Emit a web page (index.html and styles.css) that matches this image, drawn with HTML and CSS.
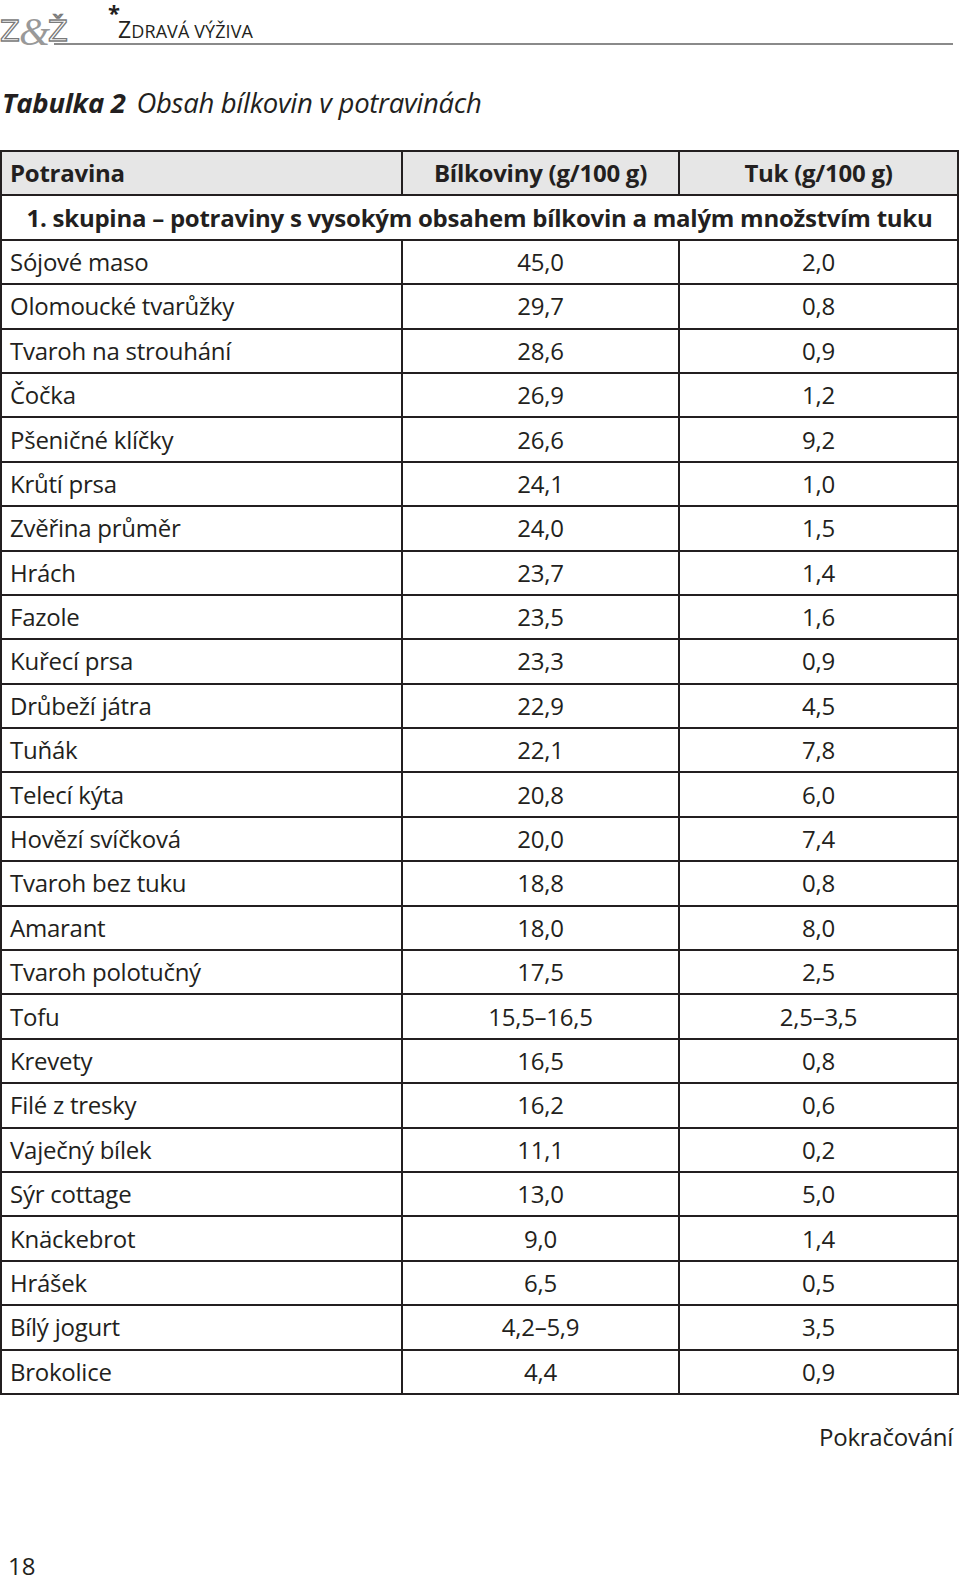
FILE: index.html
```html
<!DOCTYPE html>
<html lang="cs">
<head>
<meta charset="utf-8">
<title>Tabulka 2</title>
<link rel="stylesheet" href="styles.css">
</head>
<body>
<div class="page">
  <header class="running-head">
    <div class="logo"><span class="lz">Z</span><span class="amp">&amp;</span><span class="lz">Ž</span></div>
    <span class="star">*</span>
    <div class="section"><span class="big">Z</span>DRAVÁ VÝŽIVA</div>
  </header>

  <h1 class="caption"><b>Tabulka 2</b> Obsah bílkovin v potravinách</h1>

  <table class="data">
    <colgroup>
      <col class="c1"><col class="c2"><col class="c3">
    </colgroup>
    <thead>
      <tr class="head"><th class="name">Potravina</th><th>Bílkoviny (g/100 g)</th><th>Tuk (g/100 g)</th></tr>
    </thead>
    <tbody>
      <tr class="group"><td colspan="3">1. skupina – potraviny s vysokým obsahem bílkovin a malým množstvím tuku</td></tr>
      <tr><td>Sójové maso</td><td>45,0</td><td>2,0</td></tr>
      <tr><td>Olomoucké tvarůžky</td><td>29,7</td><td>0,8</td></tr>
      <tr><td>Tvaroh na strouhání</td><td>28,6</td><td>0,9</td></tr>
      <tr><td>Čočka</td><td>26,9</td><td>1,2</td></tr>
      <tr><td>Pšeničné klíčky</td><td>26,6</td><td>9,2</td></tr>
      <tr><td>Krůtí prsa</td><td>24,1</td><td>1,0</td></tr>
      <tr><td>Zvěřina průměr</td><td>24,0</td><td>1,5</td></tr>
      <tr><td>Hrách</td><td>23,7</td><td>1,4</td></tr>
      <tr><td>Fazole</td><td>23,5</td><td>1,6</td></tr>
      <tr><td>Kuřecí prsa</td><td>23,3</td><td>0,9</td></tr>
      <tr><td>Drůbeží játra</td><td>22,9</td><td>4,5</td></tr>
      <tr><td>Tuňák</td><td>22,1</td><td>7,8</td></tr>
      <tr><td>Telecí kýta</td><td>20,8</td><td>6,0</td></tr>
      <tr><td>Hovězí svíčková</td><td>20,0</td><td>7,4</td></tr>
      <tr><td>Tvaroh bez tuku</td><td>18,8</td><td>0,8</td></tr>
      <tr><td>Amarant</td><td>18,0</td><td>8,0</td></tr>
      <tr><td>Tvaroh polotučný</td><td>17,5</td><td>2,5</td></tr>
      <tr><td>Tofu</td><td>15,5–16,5</td><td>2,5–3,5</td></tr>
      <tr><td>Krevety</td><td>16,5</td><td>0,8</td></tr>
      <tr><td>Filé z tresky</td><td>16,2</td><td>0,6</td></tr>
      <tr><td>Vaječný bílek</td><td>11,1</td><td>0,2</td></tr>
      <tr><td>Sýr cottage</td><td>13,0</td><td>5,0</td></tr>
      <tr><td>Knäckebrot</td><td>9,0</td><td>1,4</td></tr>
      <tr><td>Hrášek</td><td>6,5</td><td>0,5</td></tr>
      <tr><td>Bílý jogurt</td><td>4,2–5,9</td><td>3,5</td></tr>
      <tr><td>Brokolice</td><td>4,4</td><td>0,9</td></tr>
    </tbody>
  </table>

  <p class="continued">Pokračování</p>

  <footer class="folio">18</footer>
</div>
</body>
</html>
```

FILE: styles.css
```css
html, body {
  margin: 0;
  padding: 0;
  background: #fff;
}

.page {
  width: 957px;
  height: 1584px;
  display: flex;
  flex-direction: column;
  font-family: "Open Sans", "Noto Sans", sans-serif;
  color: #231f20;
}

.running-head {
  position: relative;
  height: 43px;
  border-bottom: 2px solid #8a8a8a;
  margin-left: 54px;
  margin-right: 4px;
}

.logo {
  position: absolute;
  left: -54px;
  top: 11px;
  font-size: 34px;
  line-height: 34px;
  color: #8c8c8c;
  white-space: nowrap;
}

.lz {
  font-family: "DejaVu Sans", sans-serif;
  font-size: 29px;
  color: #fff;
  -webkit-text-stroke: 1.3px #7a7a7a;
}

.amp {
  font-family: "Liberation Serif", serif;
  font-style: italic;
  color: #999;
  font-size: 40px;
  margin: 0 -2px 0 -1px;
  position: relative;
  top: 4px;
}

.star {
  position: absolute;
  left: 54px;
  top: 1px;
  font-size: 22px;
  line-height: 22px;
  font-weight: 700;
}

.section {
  position: absolute;
  left: 64px;
  bottom: 0;
  font-family: "Open Sans", sans-serif;
  font-size: 18px;
  line-height: 24px;
  letter-spacing: 0.1px;
  color: #231f20;
}

.section .big {
  font-size: 23px;
}

.caption {
  margin: 42px 0 0 2px;
  height: 63px;
  font-size: 27.5px;
  font-weight: 400;
  font-style: italic;
  letter-spacing: -0.3px;
  line-height: 32px;
}

.caption b {
  font-weight: 700;
  margin-right: 4px;
}

.data {
  border-collapse: collapse;
  table-layout: fixed;
  width: 957px;
  font-size: 24px;
  letter-spacing: -0.25px;
}

.data col.c1 { width: 401px; }
.data col.c2 { width: 277px; }
.data col.c3 { width: 279px; }

.data tr {
  height: 44.4px;
}

.data th,
.data td {
  border: 2px solid #231f20;
  padding: 0 8px;
  text-align: center;
  vertical-align: middle;
  line-height: 30px;
  white-space: nowrap;
}

.data td:first-child,
.data th.name {
  text-align: left;
}

.data .head th {
  background: #e6e6e6;
  font-weight: 700;
}

.data .group td {
  text-align: center;
  font-weight: 700;
}

.continued {
  margin: 27px 4px 0 0;
  text-align: right;
  font-size: 24px;
  letter-spacing: -0.25px;
  line-height: 30px;
}

.folio {
  margin-top: auto;
  margin-bottom: 4px;
  padding-left: 8px;
  font-size: 24px;
  line-height: 28px;
}
```
